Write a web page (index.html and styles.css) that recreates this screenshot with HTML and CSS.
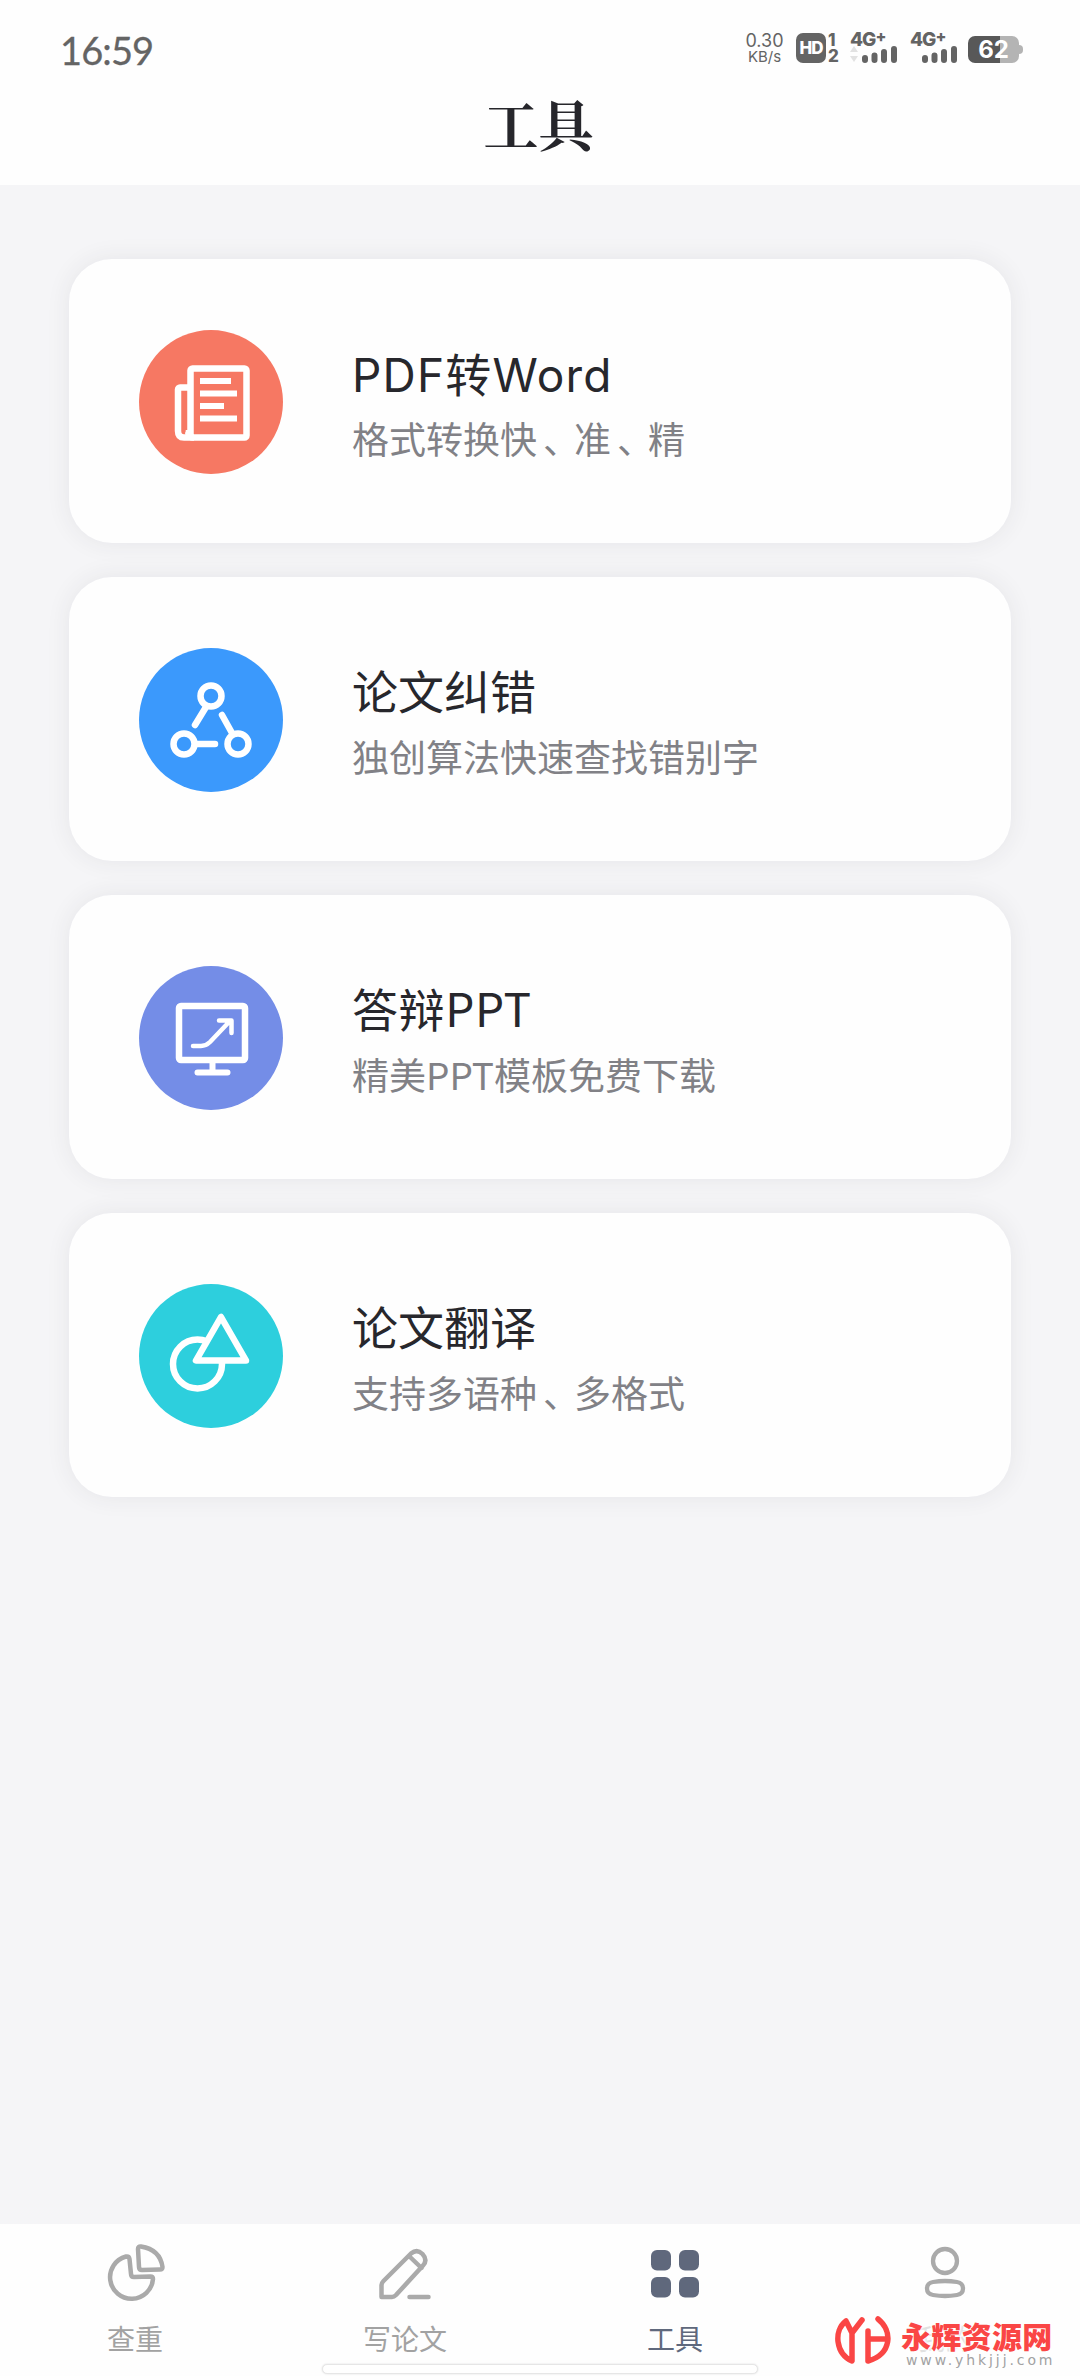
FILE: index.html
```html
<!DOCTYPE html>
<html lang="zh-CN">
<head>
<meta charset="utf-8">
<title>工具</title>
<link rel="stylesheet" href="styles.css">
</head>
<body>
<div class="app">
  <header class="header">
    <div class="status">
      <span class="clock">16:59</span>
      <div class="indicators">
        <div class="speed"><span class="rate">0.30</span><span class="unit">KB/s</span></div>
        <div class="volte"><span class="hd">HD</span><span class="sims"><span>1</span><span>2</span></span></div>
        <div class="signal">
          <span class="net">4G<sup>+</sup></span>
          <svg class="bars" viewBox="0 0 48 17" width="48" height="17"><path d="M0 6l4-6 4 6zM0 10h8l-4 6z" fill="#e2e2e2"/><path d="M15 12v2M24.500 9.500V14M34 6v8M44 3v11" stroke="#646464" stroke-width="6" stroke-linecap="round"/></svg>
        </div>
        <div class="signal">
          <span class="net">4G<sup>+</sup></span>
          <svg class="bars" viewBox="0 0 48 17" width="48" height="17"><path d="M15 12v2M24.500 9.500V14M34 6v8M44 3v11" stroke="#646464" stroke-width="6" stroke-linecap="round"/></svg>
        </div>
        <div class="battery"><span class="level">62</span></div>
      </div>
    </div>
    <h1 class="title">工具</h1>
  </header>

  <main class="tools">
    <section class="card">
      <svg class="icon" viewBox="0 0 144 144" fill="none" stroke="#fff" stroke-width="6.500" stroke-linejoin="round">
        <circle cx="72" cy="72" r="72" fill="#f67863" stroke="none"/>
        <rect x="51.500" y="38.500" width="56" height="69" rx="2"/>
        <path d="M51 57.500H41a2 2 0 0 0-2 2V101q0 6.500 6 6.500h10M50 100q0 5-3 6"/>
        <path d="M64 51h25M64 63.500h31M64 76h18M64 88.500h31" stroke-width="6" stroke-linecap="square"/>
      </svg>
      <div class="info"><h2 class="name latin">PDF转Word</h2><p class="desc">格式转换快<span class="pause">、</span>准<span class="pause">、</span>精</p></div>
    </section>
    <section class="card">
      <svg class="icon" viewBox="0 0 144 144" fill="none" stroke="#fff" stroke-width="6.500" stroke-linecap="round">
        <circle cx="72" cy="72" r="72" fill="#3b99fc" stroke="none"/>
        <circle cx="72" cy="48" r="10.500"/><circle cx="45" cy="96" r="10.500"/><circle cx="99" cy="96" r="10.500"/>
        <path d="M67 59L56 77M83 67l10 18M58 96h18"/>
      </svg>
      <div class="info"><h2 class="name">论文纠错</h2><p class="desc">独创算法快速查找错别字</p></div>
    </section>
    <section class="card">
      <svg class="icon" viewBox="0 0 144 144" fill="none" stroke="#fff" stroke-width="6.500" stroke-linecap="round" stroke-linejoin="round">
        <circle cx="72" cy="72" r="72" fill="#748de7" stroke="none"/>
        <rect x="40" y="40" width="66" height="54" rx="2"/>
        <path d="M73.500 96v10M58.500 106.500h30" stroke-width="6"/>
        <path d="M54 80h8q5 0 9-4L90 56M80 54.500h12.500V67" stroke-width="4.500"/>
      </svg>
      <div class="info"><h2 class="name ppt">答辩PPT</h2><p class="desc">精美PPT模板免费下载</p></div>
    </section>
    <section class="card">
      <svg class="icon" viewBox="0 0 144 144" fill="none" stroke="#fff" stroke-width="6.500" stroke-linejoin="round">
        <circle cx="72" cy="72" r="72" fill="#2dcfdd" stroke="none"/>
        <circle cx="58.500" cy="80" r="24.500"/>
        <path d="M82 33L57 76.500h50z" fill="#2dcfdd"/>
      </svg>
      <div class="info"><h2 class="name">论文翻译</h2><p class="desc">支持多语种<span class="pause">、</span>多格式</p></div>
    </section>
  </main>

  <nav class="tabs">
    <a class="tab">
      <svg class="glyph" viewBox="0 0 60 60" fill="none" stroke="#aaa" stroke-width="4.500" stroke-linejoin="round">
        <path d="M24.500 17q-.5-3-3.500-2.500A21.500 21.500 0 1 0 48 37q0-2.500-2.500-2.500L29 35q-3 0-3-3z"/>
        <path d="M33 7q0-3 3-2.500 19 3 21.500 20.500 0 2.500-2.500 2.500L37 28q-3 0-3-3z"/>
      </svg>
      <span>查重</span>
    </a>
    <a class="tab">
      <svg class="glyph" viewBox="0 0 60 60" fill="none" stroke="#aaa" stroke-width="4.500" stroke-linejoin="round" stroke-linecap="round">
        <path d="M6.500 55V43q0-2 2-4L36 11.500q6-5 11.500.5 5.500 6 .5 11.500L21 53q-2 2-4 2zM34 14l12.500 12"/><path d="M34.500 55h19"/>
      </svg>
      <span>写论文</span>
    </a>
    <a class="tab active">
      <svg class="glyph" viewBox="0 0 60 60" fill="#5f687c"><rect x="6" y="8" width="20" height="20.500" rx="6"/><rect x="34" y="8" width="20" height="20.500" rx="6"/><rect x="6" y="35" width="20" height="20.500" rx="6"/><rect x="34" y="35" width="20" height="20.500" rx="6"/></svg>
      <span>工具</span>
    </a>
    <a class="tab">
      <svg class="glyph" viewBox="0 0 60 60" fill="none" stroke="#aaa" stroke-width="4.300"><circle cx="30" cy="19" r="12"/><path d="M12 46.500q0-5.500 6-6.500 12-2 24 0 6 1 6 6.500t-6 6.500q-12 2-24 0-6-1-6-6.500z"/></svg>
      <span class="faded">我的</span>
    </a>
    <div class="home-bar"></div>
    <div class="watermark">
      <svg class="mark" viewBox="0 0 56 52" fill="none" stroke="#fa4645" stroke-width="5.500" stroke-linecap="round" stroke-linejoin="round"><path d="M11 5C-2 15 1 38 17 45V17M11 5l6 12L27 4M33 45V15M33 23h18M43 3c15 12 14 35-10 42"/></svg>
      <div class="brand"><strong>永辉资源网</strong><small>www.yhkjjj.com</small></div>
    </div>
  </nav>
</div>
</body>
</html>
```
FILE: styles.css
```css
* { box-sizing: border-box; }
body { margin: 0; background: #f5f5f7; font-family: Inter, "Noto Sans CJK SC", sans-serif; }
.app { display: flex; flex-direction: column; width: 1080px; height: 2376px; }
h1, h2, p { margin: 0; font-weight: 400; }

.header { height: 185px; background: #fefefe; }
.status { display: flex; justify-content: space-between; height: 93px; padding: 32px 61px 0 60px; color: #646464; }
.clock { font-family: Lato, sans-serif; font-size: 38px; line-height: 36px; letter-spacing: -0.9px; -webkit-text-stroke: 0.3px; }
.indicators { display: flex; height: 33px; }
.speed { display: flex; flex-direction: column; align-items: center; width: 39px; margin-right: 12px; white-space: nowrap; }
.rate { font-size: 18px; line-height: 17px; }
.unit { font-size: 15px; line-height: 16px; }
.volte { display: flex; width: 43px; margin-right: 11px; }
.hd { width: 30px; height: 30px; border-radius: 7px; background: #646464; color: #fff; font-size: 17px; line-height: 30px; font-weight: 800; text-align: center; letter-spacing: -1px; margin-top: 1px; }
.sims { display: flex; flex-direction: column; padding-left: 2px; font-size: 17px; line-height: 16px; font-weight: 800; }
.signal { width: 48px; margin-right: 12px; }
.signal:nth-of-type(4) { margin-right: 10px; }
.net { display: block; height: 14px; font-size: 19px; line-height: 16px; font-weight: 800; letter-spacing: -1px; white-space: nowrap; }
.net sup { font-size: 16px; line-height: 0; vertical-align: 4px; }
.bars { display: block; }
.battery { position: relative; width: 51px; height: 27px; margin-top: 4px; border-radius: 7px; background: linear-gradient(90deg, #585858 62%, #b4b4b4 62%); color: #fff; text-align: center; }
.battery::after { content: ""; position: absolute; left: 51px; top: 9px; width: 4px; height: 9px; border-radius: 0 4px 4px 0; background: #b4b4b4; }
.level { display: block; font: 700 24px/27px Inter, sans-serif; }
.title { padding-right: 3px; font: 700 55px/60px "Noto Serif CJK SC", "Noto Serif SC", "Liberation Serif", "Noto Sans CJK SC", serif; color: #26262b; text-align: center; }

.tools { flex: 1; display: flex; flex-direction: column; gap: 34px; padding: 74px 69px 0; }
.card { display: flex; align-items: center; height: 284px; padding: 2px 0 0 70px; border-radius: 43px; background: #fefefe; box-shadow: 0 0 24px rgba(50, 50, 60, .08); }
.icon { width: 144px; height: 144px; flex: none; }
.info { margin-left: 69px; white-space: nowrap; }
.name { height: 64px; font-size: 46px; line-height: 64px; color: #27272c; font-family: "Noto Sans CJK SC", sans-serif; }
.latin { font-family: Inter, "Noto Sans CJK SC", sans-serif; line-height: 72px; letter-spacing: 1.2px; }
.ppt { letter-spacing: 0.6px; }
.desc { font-size: 37px; line-height: 56px; margin-top: 7px; color: #818186; font-family: "Noto Sans CJK SC", sans-serif; }
.pause { margin: 0 -6px 0 6px; }

.tabs { position: relative; display: grid; grid-template-columns: repeat(4, 1fr); height: 152px; background: #fefefe; color: #a2a2a2; }
.tab { display: flex; flex-direction: column; align-items: center; padding-top: 18px; font-size: 28px; line-height: 40px; font-family: "Noto Sans CJK SC", sans-serif; }
.tab.active { color: #5f687c; }
.faded { opacity: .3; }
.glyph { width: 60px; height: 60px; margin-bottom: 16px; }
.home-bar { position: absolute; left: 322px; bottom: 2px; width: 436px; height: 10px; border: 1px solid #e6e6e6; border-radius: 5px; background: #fff; box-shadow: 0 0 2px #ddd; }
.watermark { position: absolute; left: 835px; top: 92px; display: flex; }
.mark { width: 56px; height: 52px; }
.brand { margin: 1px 0 0 10px; display: flex; flex-direction: column; white-space: nowrap; }
.brand strong { font: 900 30px/36px "Noto Sans CJK SC", sans-serif; color: #fa4645; letter-spacing: 0.3px; text-shadow: 0 0 3px #fff, 0 0 3px #fff, 0 0 3px #fff; }
.brand small { font: 14px/15px "DejaVu Sans", sans-serif; letter-spacing: 2.9px; margin-left: 5px; }
```
